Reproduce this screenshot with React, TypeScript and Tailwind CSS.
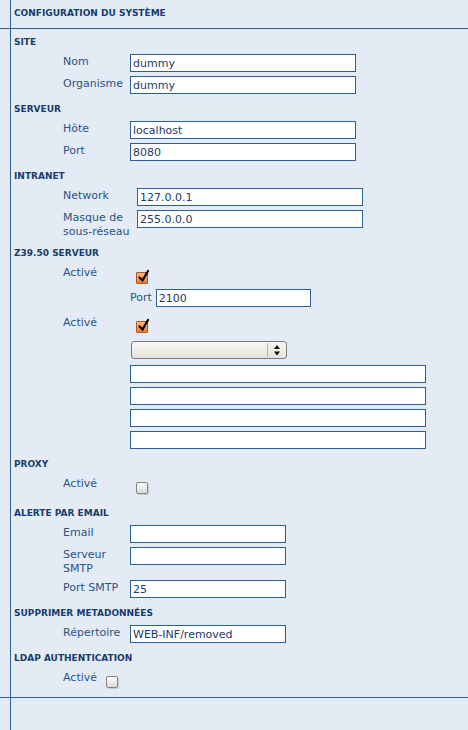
import type { ReactNode } from "react";

const Checked = ({ className = "" }: { className?: string }) => (
  <span className={`relative block h-[12px] w-[12px] shrink-0 rounded-[1px] border border-[#b4561d] bg-linear-to-b from-[#fbb783] to-[#ec7b34] ${className}`}>
    <svg viewBox="0 0 14 14" className="absolute -top-[4px] left-[0px] h-[14px] w-[14px]">
      <path d="M2.5 8.5 L5.5 11.5 L11 2" stroke="#000" strokeWidth="2.2" fill="none" strokeLinecap="round" />
    </svg>
  </span>
);

const Unchecked = ({ className = "" }: { className?: string }) => (
  <span className={`block h-[12px] w-[12px] shrink-0 rounded-[2px] border border-[#858585] bg-linear-to-b from-white to-[#d9d9d9] shadow-[1px_1px_1px_rgba(0,0,0,0.15)] ${className}`} />
);

const Input = ({ value = "", className = "w-[226px]" }: { value?: string; className?: string }) => (
  <input
    readOnly
    value={value}
    className={`block h-[18px] shrink-0 border border-[#2b5f97] bg-white px-[2px] text-[11px] leading-[16px] text-[#1c3b68] outline-none ${className}`}
  />
);

const Label = ({ children, className = "w-[67px]" }: { children: ReactNode; className?: string }) => (
  <span className={`block shrink-0 pr-[4px] pt-[1px] text-[11px] leading-[14px] text-[#2a5387] ${className}`}>{children}</span>
);

function Section({ title, children, className = "pb-[8px]" }: { title: string; children: ReactNode; className?: string }) {
  return (
    <section className={className}>
      <h2 className="text-[9px] font-bold leading-[14px] text-[#163d6d]">{title}</h2>
      <div className="mt-[5px] flex flex-col gap-[4px] pl-[49px]">{children}</div>
    </section>
  );
}

function Field({ label, value, labelW, inputW }: { label: string; value?: string; labelW?: string; inputW?: string }) {
  return (
    <div className="flex items-start">
      <Label className={labelW}>{label}</Label>
      <Input value={value} className={inputW} />
    </div>
  );
}

const FakeSelect = () => (
  <div className="ml-[1px] flex h-[18px] w-[156px] items-center rounded-[3px] border border-[#7b7b7b] bg-linear-to-b from-[#f8f7f4] via-[#efede9] to-[#e5e2dd]">
    <div className="flex-1" />
    <div className="h-[14px] border-l border-[#b3afa9]" />
    <svg viewBox="0 0 18 14" className="h-[14px] w-[18px]">
      <path d="M6 6 L9 2 L12 6 Z" fill="#111" />
      <path d="M6 8.5 L9 12.5 L12 8.5 Z" fill="#111" />
    </svg>
  </div>
);

export default function App() {
  return (
    <div className="flex min-h-[730px] flex-col bg-[#e4ebf4] font-['DejaVu_Sans',Verdana,sans-serif]">
      <div className="flex h-[29px] border-b border-[#2a5f96]">
        <div className="w-[11px] shrink-0 border-r border-[#2a5f96]" />
        <h1 className="pl-[3px] pt-[6px] text-[9px] font-bold leading-[14px] text-[#163d6d]">CONFIGURATION DU SYSTÈME</h1>
      </div>

      <div className="flex h-[669px] border-b border-[#2a5f96]">
        <div className="w-[11px] shrink-0 border-r border-[#2a5f96]" />
        <div className="flex-1 pl-[3px] pt-[6px]">
          <Section title="SITE">
            <Field label="Nom" value="dummy" />
            <Field label="Organisme" value="dummy" />
          </Section>

          <Section title="SERVEUR">
            <Field label="Hôte" value="localhost" />
            <Field label="Port" value="8080" />
          </Section>

          <Section title="INTRANET" className="pb-[7px]">
            <Field label="Network" value="127.0.0.1" labelW="w-[74px]" inputW="w-[226px]" />
            <Field label="Masque de sous-réseau" value="255.0.0.0" labelW="w-[74px]" inputW="w-[226px]" />
          </Section>

          <section className="pb-[8px]">
            <h2 className="text-[9px] font-bold leading-[14px] text-[#163d6d]">Z39.50 SERVEUR</h2>
            <div className="mt-[5px] flex flex-col pl-[49px]">
              <div className="flex items-start">
                <Label>Activé</Label>
                <div className="flex flex-col">
                  <Checked className="ml-[6px] mt-[7px]" />
                  <div className="mt-[5px] flex items-center">
                    <span className="pr-[4px] text-[11px] leading-[14px] text-[#2a5387]">Port</span>
                    <Input value="2100" className="w-[155px]" />
                  </div>
                </div>
              </div>
              <div className="mt-[8px] flex items-start">
                <Label>Activé</Label>
                <div className="flex flex-col">
                  <Checked className="ml-[6px] mt-[6px]" />
                  <div className="mt-[8px]">
                    <FakeSelect />
                  </div>
                  <div className="mt-[6px] flex flex-col gap-[4px]">
                    <Input className="w-[296px]" />
                    <Input className="w-[296px]" />
                    <Input className="w-[296px]" />
                    <Input className="w-[296px]" />
                  </div>
                </div>
              </div>
            </div>
          </section>

          <Section title="PROXY" className="pb-[12px]">
            <div className="flex items-start">
              <Label>Activé</Label>
              <Unchecked className="ml-[6px] mt-[6px]" />
            </div>
          </Section>

          <Section title="ALERTE PAR EMAIL">
            <Field label="Email" inputW="w-[156px]" />
            <Field label="Serveur SMTP" inputW="w-[156px]" />
            <Field label="Port SMTP" value="25" inputW="w-[156px]" />
          </Section>

          <Section title="SUPPRIMER METADONNÉES">
            <Field label="Répertoire" value="WEB-INF/removed" inputW="w-[156px]" />
          </Section>

          <Section title="LDAP AUTHENTICATION">
            <div className="flex items-start">
              <Label className="w-auto">Activé</Label>
              <Unchecked className="ml-[5px] mt-[6px]" />
            </div>
          </Section>
        </div>
      </div>

      <div className="flex flex-1">
        <div className="w-[11px] shrink-0 border-r border-[#2a5f96]" />
      </div>
    </div>
  );
}
